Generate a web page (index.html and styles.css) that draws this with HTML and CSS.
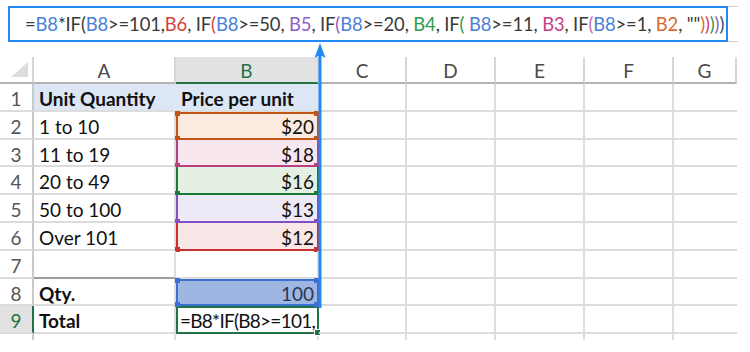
FILE: index.html
```html
<!DOCTYPE html>
<html lang="en">
<head>
  <meta charset="UTF-8">
  <title>Nested IF price per unit</title>
  <link rel="stylesheet" href="styles.css">
</head>
<body>
  <div class="formula-row">
    <div class="formula-box">
      <span class="formula">=<span class="c-blue">B8</span>*IF(<span class="c-blue">B8</span>&gt;=101,<span class="c-red">B6</span>, IF<span class="c-red">(</span><span class="c-blue">B8</span>&gt;=50, <span class="c-purple">B5</span>, IF<span class="c-purple">(</span><span class="c-blue">B8</span>&gt;=20, <span class="c-green">B4</span>, IF<span class="c-green">(</span> <span class="c-blue">B8</span>&gt;=11, <span class="c-pink">B3</span>, IF<span class="c-magenta">(</span><span class="c-blue">B8</span>&gt;=1, <span class="c-orange">B2</span>, ""<span class="c-orange">)</span><span class="c-pink">)</span><span class="c-green">)</span><span class="c-purple">)</span><span class="c-navy">)</span></span>
    </div>
  </div>

  <div class="sheet">
    <!-- column headings -->
    <div class="corner"></div>
    <div class="col-head">A</div>
    <div class="col-head active">B</div>
    <div class="col-head">C</div>
    <div class="col-head">D</div>
    <div class="col-head">E</div>
    <div class="col-head">F</div>
    <div class="col-head">G</div>

    <!-- row 1 -->
    <div class="row-head">1</div>
    <div class="cell title">Unit Quantity</div>
    <div class="cell title">Price per unit</div>
    <div class="cell"></div><div class="cell"></div><div class="cell"></div><div class="cell"></div><div class="cell"></div>

    <!-- row 2 -->
    <div class="row-head">2</div>
    <div class="cell">1 to 10</div>
    <div class="cell num ref ref-orange ref-first">$20</div>
    <div class="cell"></div><div class="cell"></div><div class="cell"></div><div class="cell"></div><div class="cell"></div>

    <!-- row 3 -->
    <div class="row-head">3</div>
    <div class="cell">11 to 19</div>
    <div class="cell num ref ref-pink">$18</div>
    <div class="cell"></div><div class="cell"></div><div class="cell"></div><div class="cell"></div><div class="cell"></div>

    <!-- row 4 -->
    <div class="row-head">4</div>
    <div class="cell">20 to 49</div>
    <div class="cell num ref ref-green">$16</div>
    <div class="cell"></div><div class="cell"></div><div class="cell"></div><div class="cell"></div><div class="cell"></div>

    <!-- row 5 -->
    <div class="row-head">5</div>
    <div class="cell">50 to 100</div>
    <div class="cell num ref ref-purple">$13</div>
    <div class="cell"></div><div class="cell"></div><div class="cell"></div><div class="cell"></div><div class="cell"></div>

    <!-- row 6 -->
    <div class="row-head">6</div>
    <div class="cell">Over 101</div>
    <div class="cell num ref ref-red">$12</div>
    <div class="cell"></div><div class="cell"></div><div class="cell"></div><div class="cell"></div><div class="cell"></div>

    <!-- row 7 -->
    <div class="row-head">7</div>
    <div class="cell bordered-below"></div>
    <div class="cell"></div>
    <div class="cell"></div><div class="cell"></div><div class="cell"></div><div class="cell"></div><div class="cell"></div>

    <!-- row 8 -->
    <div class="row-head">8</div>
    <div class="cell bold">Qty.</div>
    <div class="cell num ref ref-blue ref-first">100</div>
    <div class="cell"></div><div class="cell"></div><div class="cell"></div><div class="cell"></div><div class="cell"></div>

    <!-- row 9 -->
    <div class="row-head active">9</div>
    <div class="cell bold">Total</div>
    <div class="cell selected">=B8*IF(B8&gt;=101,</div>
    <div class="cell"></div><div class="cell"></div><div class="cell"></div><div class="cell"></div><div class="cell"></div>

    <!-- grid stubs below the last row -->
    <div class="stub head"></div>
    <div class="stub"></div><div class="stub"></div><div class="stub"></div><div class="stub"></div>
    <div class="stub"></div><div class="stub"></div><div class="stub last"></div>
  </div>

  <!-- arrow from the Qty cell up to the formula bar -->
  <svg class="pointer" width="16" height="268" viewBox="0 0 16 268">
    <line x1="8" y1="12" x2="8" y2="266" stroke="#1f8bf2" stroke-width="3"/>
    <polygon points="8,1 2.5,16 8,13 13.5,16" fill="#1f8bf2"/>
  </svg>
</body>
</html>
```

FILE: styles.css
```css
body {
  margin: 0;
  width: 750px;
  height: 352px;
  background: #fff;
  font-family: Lato, "Open Sans", sans-serif;
  color: #111;
  position: relative;
  overflow: hidden;
}

/* formula bar */
.formula-row {
  margin: 6px 12px 0 8px;
  border-top: 1px solid #cfcfcf;
  border-bottom: 1px solid #cfcfcf;
  height: 34px;
}

.formula-box {
  width: 720px;
  height: 36px;
  margin-top: -1px;
  box-sizing: border-box;
  border: 2px solid #1f8bf2;
  padding: 0 0 0 15px;
  display: flex;
  align-items: center;
  background: #fff;
  overflow: hidden;
}

.formula {
  font-size: 18.4px;
  color: #3a3a3a;
  white-space: pre;
  letter-spacing: -0.12px;
}

.c-blue { color: #4a7fd8; }
.c-red { color: #d6403c; }
.c-purple { color: #8c5cc9; }
.c-green { color: #2f9a48; }
.c-pink { color: #c73e82; }
.c-magenta { color: #c368c0; }
.c-orange { color: #d8692b; }
.c-navy { color: #3b4868; }

/* sheet grid */
.sheet {
  margin-top: 15px;
  display: grid;
  grid-template-columns: 34px 142px 143px 88px 89px 89px 89px 63px;
  grid-template-rows: 27px repeat(9, 27.8px) 6px;
  font-size: 19px;
}

.sheet > div {
  box-sizing: border-box;
}

.corner {
  border-right: 2px solid #d6d6d6;
  border-bottom: 2px solid #b3b3b3;
  display: flex;
  justify-content: flex-end;
  align-items: flex-end;
}

.corner::after {
  content: "";
  width: 17px;
  height: 15px;
  margin: 0 4px 5px 0;
  background: #dcdcdc;
  clip-path: polygon(100% 0, 100% 100%, 0 100%);
}

.col-head {
  border-right: 2px solid #d6d6d6;
  border-bottom: 2px solid #b3b3b3;
  display: flex;
  align-items: center;
  justify-content: center;
  color: #4a4a4a;
  padding-top: 1px;
}

.col-head:last-of-type {
  border-right: none;
}

.col-head.active {
  background: #e2e2e2;
  color: #217346;
  border-bottom-color: #217346;
}

.row-head {
  border-right: 2px solid #c9c9c9;
  border-bottom: 2px solid #dcdcdc;
  text-align: center;
  line-height: 26px;
  padding-top: 2px;
  color: #555;
}

.row-head.active {
  background: #e2e2e2;
  color: #217346;
  border-right-color: #217346;
}

.cell {
  position: relative;
  border-right: 2px solid #dcdcdc;
  border-bottom: 2px solid #dcdcdc;
  line-height: 26px;
  padding: 2px 0 0 5px;
  white-space: nowrap;
}

.sheet > .cell:nth-child(8n) {
  border-right: none;
}

.title {
  background: #dce6f4;
  font-weight: 700;
  border-right-color: #dce6f4;
}

.bold {
  font-weight: 700;
}

.bordered-below {
  border-bottom-color: #9c9c9c;
}

.num {
  text-align: right;
  padding: 2px 3px 0 0;
}

/* coloured references used by the formula */
.ref {
  border: 2px solid var(--ref);
  border-top: none;
  background: var(--fill);
}

.ref::after {
  content: "";
  position: absolute;
  left: -3px;
  bottom: -3px;
  width: 5px;
  height: 5px;
  background: var(--ref);
  box-shadow: 139px 0 var(--ref);
}

.ref-first {
  border-top: 2px solid var(--ref);
  padding-top: 0;
}

.ref-first::before {
  content: "";
  position: absolute;
  left: -3px;
  top: -3px;
  width: 5px;
  height: 5px;
  background: var(--ref);
  box-shadow: 139px 0 var(--ref);
}

.ref-orange { --ref: #c25514; --fill: #fbeae0; }
.ref-pink { --ref: #b8407f; --fill: #f8e7ef; }
.ref-green { --ref: #1d7a36; --fill: #e4f0e4; }
.ref-purple { --ref: #8250c4; --fill: #eee9f6; }
.ref-red { --ref: #cc2f30; --fill: #f9e6e6; }
.ref-blue { --ref: #3b6fd2; --fill: #9db6e2; color: #2a3550; z-index: 2; }

.selected {
  border: 2px solid #217346;
  padding: 0 0 0 2px;
  line-height: 26px;
  letter-spacing: -0.75px;
}

.selected::after {
  content: "";
  position: absolute;
  right: -4px;
  bottom: -4px;
  width: 5px;
  height: 5px;
  background: #217346;
  border: 1px solid #fff;
}

.stub {
  border-right: 2px solid #dcdcdc;
}

.stub.head {
  border-right-color: #c9c9c9;
}

.stub.last {
  border-right: none;
}

/* annotation arrow */
.pointer {
  position: absolute;
  left: 312px;
  top: 42px;
}
```
